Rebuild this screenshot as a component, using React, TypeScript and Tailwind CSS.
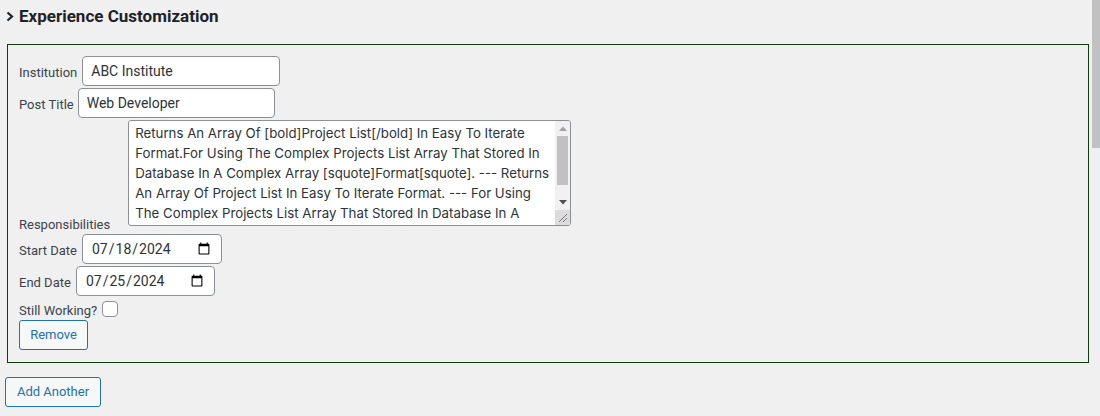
import React from 'react';

const responsibilities =
  'Returns An Array Of [bold]Project List[/bold] In Easy To Iterate Format.For Using The Complex Projects List Array That Stored In Database In A Complex Array [squote]Format[squote]. --- Returns An Array Of Project List In Easy To Iterate Format. --- For Using The Complex Projects List Array That Stored In Database In A Complex Array [squote]Format[squote].';

const inputCls =
  'h-[30px] rounded border border-[#8c8f94] bg-white px-2 text-[14px] text-[#2c3338] outline-none';

const btnCls =
  'block h-[30px] rounded-[3px] border border-[#2271b1] bg-[#f6f7f7] text-[13px] text-[#2271b1]';

// the textarea's classic scrollbar with arrows and resize grip
const TextareaScrollbar: React.FC = () => (
  <div className="flex w-[15px] flex-col bg-[#f1f1f1]">
    <div className="flex h-[15px] items-center justify-center">
      <svg width="8" height="5" viewBox="0 0 8 5">
        <polygon points="0,5 4,0.5 8,5" fill="#a3a3a3" />
      </svg>
    </div>
    <div className="flex-1">
      <div className="mx-[2px] h-[49px] bg-[#c1c1c1]" />
    </div>
    <div className="flex h-[15px] items-center justify-center">
      <svg width="8" height="5" viewBox="0 0 8 5">
        <polygon points="0,0 8,0 4,4.5" fill="#505050" />
      </svg>
    </div>
    <div className="flex h-[15px] items-end justify-end bg-[#dcdcdc]">
      <svg width="10" height="10" viewBox="0 0 10 10" className="mb-[2px] mr-[2px]">
        <line x1="1" y1="9" x2="9" y2="1" stroke="#7a7a7a" strokeWidth="1" />
        <line x1="5" y1="9" x2="9" y2="5" stroke="#7a7a7a" strokeWidth="1" />
      </svg>
    </div>
  </div>
);

export default function App() {
  return (
    <div className="flex h-[416px] w-[1100px] overflow-hidden bg-[#f0f0f1] font-['Roboto',sans-serif]">
      <main className="flex-1">
        {/* section heading */}
        <div className="flex items-center gap-[5px] pl-[6px] pt-[5px]">
          <svg width="8" height="11" viewBox="0 0 8 11" className="text-[#1d2327]">
            <polyline points="1.5,1.5 6,5.5 1.5,9.5" fill="none" stroke="currentColor" strokeWidth="2.2" />
          </svg>
          <h2 className="text-[17px] font-bold leading-[22px] text-[#1d2327]">Experience Customization</h2>
        </div>

        <div className="ml-[7px] mr-[3px] mt-[17px] border border-[#0b3d0b] pb-[12px] pl-[11px] pt-[11px] text-[13px] text-[#3c434a]">
          <div className="mb-[2px] flex items-center">
            <label className="pt-1">Institution</label>
            <input className={`${inputCls} ml-[5px] w-[198px]`} defaultValue="ABC Institute" />
          </div>
          <div className="mb-[2px] flex items-center">
            <label className="pt-1">Post Title</label>
            <input className={`${inputCls} ml-[4px] w-[197px]`} defaultValue="Web Developer" />
          </div>
          <div className="mb-[8px] flex items-end">
            <label className="-mb-[8px]">Responsibilities</label>
            <div className="ml-[18px] flex h-[106px] w-[443px] overflow-hidden rounded-[3px] border border-[#8c8f94] bg-white">
              <textarea
                className="flex-1 resize-none overflow-hidden pl-[6px] pr-[4px] py-[2px] font-['Inter',sans-serif] text-[13.25px] leading-[20px] text-[#2c3338] outline-none"
                defaultValue={responsibilities}
              />
              <TextareaScrollbar />
            </div>
          </div>
          <div className="mb-[2px] flex items-center">
            <label className="pt-1">Start Date</label>
            <input type="date" className={`${inputCls} ml-[5px] w-[140px]`} defaultValue="2024-07-18" />
          </div>
          <div className="mb-[2px] flex items-center">
            <label className="pt-1">End Date</label>
            <input type="date" className={`${inputCls} ml-[5px] w-[139px]`} defaultValue="2024-07-25" />
          </div>
          <div className="flex h-[22px] items-center">
            <label className="pt-[3px]">Still Working?</label>
            <input
              type="checkbox"
              className="ml-[5px] h-4 w-4 appearance-none rounded border border-[#8c8f94] bg-white"
            />
          </div>
          <button className={`${btnCls} w-[69px]`}>Remove</button>
        </div>

        <button className={`${btnCls} ml-[5px] mt-[14px] w-[96px]`}>Add Another</button>
      </main>

      {/* page scrollbar */}
      <div className="w-2 bg-[#f0f0f1]">
        <div className="h-[148px] bg-[#c1c1c1]" />
      </div>
    </div>
  );
}
